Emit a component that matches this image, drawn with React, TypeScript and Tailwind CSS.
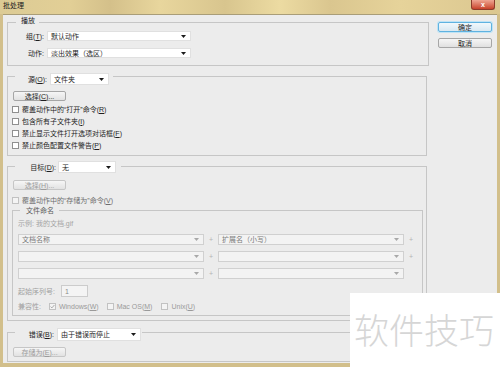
import React from 'react';

const UI = "font-['Liberation_Sans','Noto_Sans_CJK_SC',sans-serif] text-[7px] leading-none";

function K({ c }: { c: string }) {
    return <span className="underline underline-offset-1">{c}</span>;
}

function Arrow({ off }: { off?: boolean }) {
    return (
        <svg width="5" height="3" viewBox="0 0 5 3" className={off ? 'text-[#a8a8a8]' : 'text-[#1a1a1a]'}>
            <path d="M0 0h5L2.5 3z" fill="currentColor" />
        </svg>
    );
}

function Select({ value, className, off }: { value?: string; className: string; off?: boolean }) {
    return (
        <div
            className={`flex items-center justify-between border pl-[3px] pr-[4px] ${off
                ? 'border-[#d0d0d0] bg-[#f3f3f3] text-[#7a7a7a]'
                : 'border-[#e0e0e0] bg-white text-[#1e1e1e]'
                } ${className}`}
        >
            <span>{value}</span>
            <Arrow off={off} />
        </div>
    );
}

function Btn({ children, off }: { children: React.ReactNode; off?: boolean }) {
    return (
        <div
            className={`ml-[5px] flex h-[10px] w-[53px] items-center justify-center rounded-[2px] border bg-gradient-to-b from-[#f6f6f6] to-[#e2e2e2] ${off ? 'border-[#c6c6c6] text-[#9c9c9c]' : 'border-[#a6a6a6] text-[#1e1e1e]'
                }`}
        >
            {children}
        </div>
    );
}

function Check({ children, off, checked, tone }: { children: React.ReactNode; off?: boolean; checked?: boolean; tone?: string }) {
    return (
        <div className={`flex h-[12px] items-center ${tone ?? (off ? 'text-[#9a9a9a]' : 'text-[#1e1e1e]')}`}>
            <span
                className={`flex h-[7px] w-[7px] items-center justify-center border ${off ? 'border-[#c2c2c2] bg-[#f4f4f4]' : 'border-[#8f8f8f] bg-white'
                    }`}
            >
                {checked && (
                    <svg width="5" height="5" viewBox="0 0 5 5">
                        <path d="M0.6 2.6l1.3 1.3L4.4 1" stroke="#a0a0a0" strokeWidth="0.9" fill="none" />
                    </svg>
                )}
            </span>
            <span className="ml-[3px]">{children}</span>
        </div>
    );
}

function NameRow({ left, right, tail = true }: { left?: string; right?: string; tail?: boolean }) {
    return (
        <div className="ml-[5px] mt-[6px] flex h-[11px] items-center">
            <Select value={left} off className="h-[11px] w-[186px]" />
            <span className="w-[14px] text-center text-[#b4b4b4]">+</span>
            <Select value={right} off className="h-[11px] w-[186px]" />
            {tail && <span className="w-[14px] text-center text-[#b4b4b4]">+</span>}
        </div>
    );
}

export default function App() {
    return (
        <div className={`relative flex h-[367px] w-[500px] flex-col overflow-hidden bg-[#d2bf8b] ${UI}`}>
            {/* title bar */}
            <div className="flex h-[14px] items-start justify-between bg-[linear-gradient(90deg,#dccb95_0%,#e2cf96_14%,#d4c08a_22%,#e8d69d_32%,#d8c58e_45%,#ecdba2_56%,#dac68f_66%,#e6d39a_80%,#dbc790_100%)]">
                <span className="pl-[3px] pt-[2px] text-[#1c1c1c]">批处理</span>
                <div className="mr-[5px] flex h-[10px] w-[24px] items-center justify-center rounded-b-[3px] border border-t-0 border-[#8c3b2b] bg-gradient-to-b from-[#eea592] to-[#c7412a] text-[7px] font-bold text-white">
                    x
                </div>
            </div>

            {/* body */}
            <div className="mx-[3px] mb-[4px] flex flex-1 border-t border-[#a99d78] bg-[#ececec]">
                <div className="ml-[4px] mt-[7px] flex w-[422px] flex-col">
                    {/* 播放 */}
                    <div className="border border-[#c6c6c6] pb-[7px]">
                        <div className="-mt-[8px] ml-[8px] flex">
                            <span className="flex h-[10px] items-center bg-[#ececec] pl-[5px] pr-[4px] text-[#1e1e1e]">播放</span>
                        </div>
                        <div className="mt-[6px] flex h-[10px] items-center">
                            <span className="w-[36px] text-right text-[#1e1e1e]">组(<K c="T" />):</span>
                            <Select value="默认动作" className="ml-[3px] h-[10px] w-[144px]" />
                        </div>
                        <div className="mt-[7px] flex h-[10px] items-center">
                            <span className="w-[36px] text-right text-[#1e1e1e]">动作:</span>
                            <Select value="淡出效果（选区）" className="ml-[3px] h-[10px] w-[144px]" />
                        </div>
                    </div>

                    {/* 源 */}
                    <div className="mr-[2px] mt-[10px] border border-[#c6c6c6] pb-[4px]">
                        <div className="-mt-[4px] ml-[7px] flex">
                            <div className="flex h-[12px] items-center bg-[#ececec] pr-[4px]">
                                <span className="w-[32px] text-right text-[#1e1e1e]">源(<K c="O" />):</span>
                                <Select value="文件夹" className="ml-[3px] h-[12px] w-[59px]" />
                            </div>
                        </div>
                        <div className="mt-[6px]">
                            <Btn>选择(<K c="C" />)...</Btn>
                        </div>
                        <div className="ml-[4px] mt-[2px] flex flex-col">
                            <Check>覆盖动作中的“打开”命令(<K c="R" />)</Check>
                            <Check>包含所有子文件夹(<K c="I" />)</Check>
                            <Check>禁止显示文件打开选项对话框(<K c="F" />)</Check>
                            <Check>禁止颜色配置文件警告(<K c="P" />)</Check>
                        </div>
                    </div>

                    {/* 目标 */}
                    <div className="mr-[2px] mt-[10px] border border-[#c6c6c6] pb-[4px]">
                        <div className="-mt-[6px] ml-[7px] flex">
                            <div className="flex h-[12px] items-center bg-[#ececec] pr-[5px]">
                                <span className="w-[41px] text-right text-[#1e1e1e]">目标(<K c="D" />):</span>
                                <Select value="无" className="ml-[2px] h-[12px] w-[58px]" />
                            </div>
                        </div>
                        <div className="mt-[7px]">
                            <Btn off>选择(<K c="H" />)...</Btn>
                        </div>
                        <div className="ml-[4px] mt-[4px]">
                            <Check off tone="text-[#6e6e6e]">覆盖动作中的“存储为”命令(<K c="V" />)</Check>
                        </div>

                        {/* 文件命名 */}
                        <div className="ml-[4px] mr-[3px] mt-[4px] border border-[#c6c6c6] pb-[3px]">
                            <div className="-mt-[6px] ml-[7px] flex">
                                <span className="flex h-[10px] items-center bg-[#ececec] pl-[6px] pr-[5px] text-[#5a5a5a]">文件命名</span>
                            </div>
                            <div className="ml-[5px] mt-[3px] flex h-[10px] items-center text-[#a4a4a4]">示例: 我的文档.gif</div>
                            <NameRow left="文档名称" right="扩展名（小写）" />
                            <NameRow />
                            <NameRow tail={false} />
                            <div className="ml-[5px] mt-[6px] flex h-[12px] items-center text-[#a0a0a0]">
                                <span>起始序列号:</span>
                                <div className="ml-[6px] flex h-[12px] w-[27px] items-center border border-[#cccccc] bg-[#f4f4f4] pl-[3px] text-[#8a8a8a]">1</div>
                            </div>
                            <div className="ml-[5px] mt-[3px] flex h-[12px] items-center text-[#a0a0a0]">
                                <span className="mr-[8px]">兼容性:</span>
                                <Check off checked>Windows(<K c="W" />)</Check>
                                <div className="ml-[8px]"><Check off>Mac OS(<K c="M" />)</Check></div>
                                <div className="ml-[9px]"><Check off>Unix(<K c="U" />)</Check></div>
                            </div>
                        </div>
                    </div>

                    {/* 错误 */}
                    <div className="mr-[2px] mt-[11px] border border-[#c6c6c6] pb-[4px]">
                        <div className="-mt-[5px] ml-[7px] flex">
                            <div className="flex h-[13px] items-center bg-[#ececec] pr-[1px]">
                                <span className="w-[39px] text-right text-[#1e1e1e]">错误(<K c="B" />):</span>
                                <Select value="由于错误而停止" className="ml-[3px] h-[13px] w-[84px]" />
                            </div>
                        </div>
                        <div className="mt-[6px]">
                            <Btn off>存储为(<K c="E" />)...</Btn>
                        </div>
                    </div>
                </div>

                {/* buttons */}
                <div className="ml-[9px] mt-[7px] flex w-[54px] flex-col gap-[6px]">
                    <div className="flex h-[10px] items-center justify-center rounded-[2px] border border-[#5fb2e0] bg-gradient-to-b from-[#f1f8fc] to-[#d9e8f1] text-[#1e1e1e] shadow-[0_0_0_1px_#bfe3f5]">
                        确定
                    </div>
                    <div className="flex h-[10px] items-center justify-center rounded-[2px] border border-[#a6a6a6] bg-gradient-to-b from-[#f6f6f6] to-[#e0e0e0] text-[#1e1e1e]">
                        取消
                    </div>
                </div>
            </div>

            {/* watermark overlay */}
            <div className="absolute bottom-0 right-0 h-[74px] w-[150px] bg-white pl-[4px] pt-[18px]">
                <span className="font-['Noto_Sans_CJK_SC',sans-serif] text-[35px] font-light leading-none text-[#d6d6d6]">软件技巧</span>
            </div>
        </div>
    );
}
